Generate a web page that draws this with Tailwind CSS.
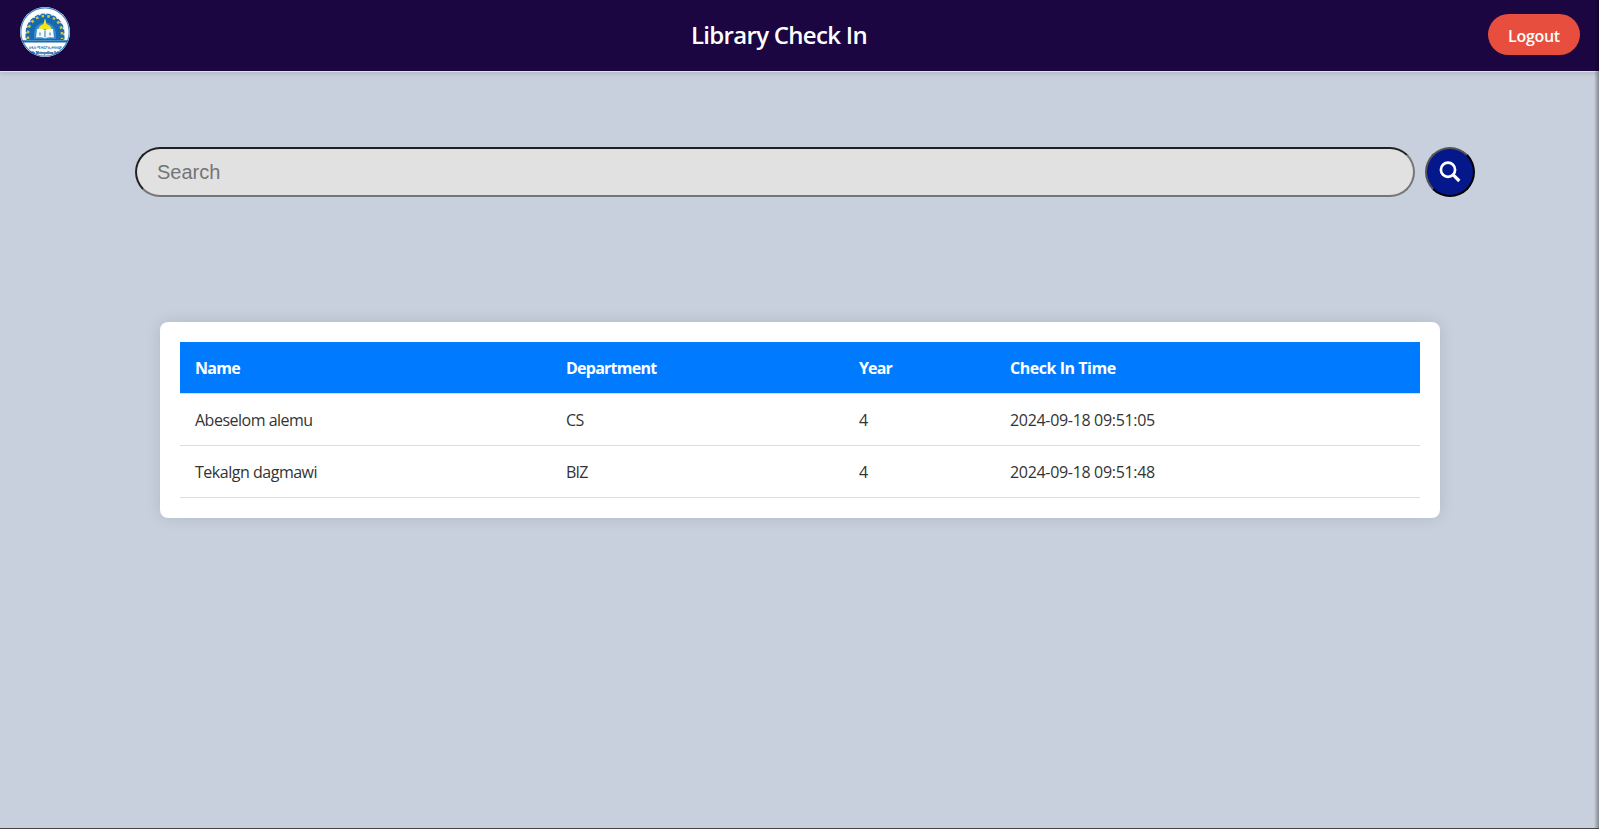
<!DOCTYPE html>
<html lang="en">
<head>
<meta charset="utf-8">
<title>Library Check In</title>
<script src="https://cdn.jsdelivr.net/npm/@tailwindcss/browser@4"></script>
</head>
<body class="relative flex h-screen flex-col overflow-hidden bg-[#c8cfdd] font-['Open_Sans','Noto_Sans',sans-serif] text-[#333]">
<header class="relative flex h-[72px] shrink-0 items-start justify-between border-b border-[#e2dbea] bg-[#1b0642] pr-[19px] pl-5 shadow-[0_2px_4px_rgba(0,0,0,0.1)]">
  <svg class="mt-[7px] size-[50px]" viewBox="0 0 50 50">
    <clipPath id="c"><circle cx="25" cy="25" r="25"/></clipPath>
    <g clip-path="url(#c)">
      <rect width="50" height="50" fill="#fff"/>
      <circle cx="25" cy="25" r="24.200" fill="none" stroke="#3f86c4" stroke-width="1.200"/>
      <path d="M5.500 33V26A19.500 19.500 0 0 1 44.500 26V33Z" fill="#1769b2"/>
      <path d="M5.500 33V26A19.500 19.500 0 0 1 44.500 26V33" fill="none" stroke="#eef5f5" stroke-width="2" stroke-dasharray="2 4.200"/>
      <path d="M8 32V26A17 17 0 0 1 42 26V32" fill="none" stroke="#c8c34a" stroke-width="2.600" stroke-dasharray="2.600 3.200"/>
      <path d="M12 33V27A13 13 0 0 1 38 27V33Z" fill="#1769b2"/>
      <path d="M14 32V27A11 11.500 0 0 1 36 27V32Z" fill="#328bc8"/>
      <path d="M18.500 22q.5-3.500 5-5l1.200-5h.6l1.200 5q4.500 1.500 5 5Z" fill="#f4e516"/>
      <path d="M17 22q5-1 8 1 3-2 8-1l1 8.500q-6-1-9 1-3-2-9-1Z" fill="#f3f8fb"/>
      <path d="M25 23.500v7M20 25.500v3M30 25.500v3" stroke="#4b91c5" stroke-width="1.200" fill="none"/>
      <path d="M2 33.300H48L47 35.500H3Z" fill="#1769b2"/>
      <text x="25" y="41.500" text-anchor="middle" font-size="4.500" font-weight="900" fill="#1767ac" textLength="33" lengthAdjust="spacingAndGlyphs" font-family="Noto Sans">አዲስ ሜትሮፖሊታን ኮሌጅ</text>
      <text x="25" y="46.500" text-anchor="middle" font-size="5" font-weight="700" fill="#0d56a0" stroke="#0d56a0" stroke-width=".25" textLength="36" lengthAdjust="spacingAndGlyphs" font-family="Liberation Serif">Addis Metropolitan School</text>
    </g>
  </svg>
  <h1 class="mt-[17px] text-[24px] leading-9 font-semibold tracking-[-0.7px] text-white">Library Check In</h1>
  <button class="mt-[14px] h-[41px] w-[92px] rounded-[20.500px] bg-[#e84e3e] pt-[2px] text-[16px] font-semibold tracking-[-0.3px] text-white">Logout</button>
</header>
<main class="flex flex-col items-center">
  <form class="mt-[75px] ml-[11px] flex gap-[10px]">
    <input class="h-[50px] w-[1280px] rounded-[25px] border-2 border-[#767676] [border-style:inset] bg-[#e1e1e1] px-5 font-['Liberation_Sans',sans-serif] text-[20px] placeholder:text-[#757575]" placeholder="Search">
    <button type="button" class="flex size-[50px] items-center justify-center rounded-full border-2 border-black [border-style:outset] bg-[#04178b]">
      <svg class="size-6" viewBox="0 0 24 24" fill="none" stroke="#fff"><circle cx="10" cy="9.700" r="7.100" stroke-width="2.700"/><path d="M15 14.700l6.300 6.300" stroke-width="3.200"/></svg>
    </button>
  </form>
  <section class="mt-[125px] mr-px ml-[2px] h-[196px] w-[1280px] rounded-lg bg-white p-5 shadow-[0_0_15px_rgba(0,0,0,0.1)]">
    <table class="w-[1240px] table-fixed border-collapse text-left text-[16px] leading-6">
      <colgroup><col class="w-[371px]"><col class="w-[293px]"><col class="w-[151px]"><col></colgroup>
      <thead class="bg-[#007bff] text-white">
        <tr class="h-[51px] border-b border-[#ddd] font-bold"><th class="px-[15px] pt-0.5 tracking-[-0.7px]">Name</th><th class="px-[15px] pt-0.5 tracking-[-0.75px]">Department</th><th class="px-[15px] pt-0.5 tracking-[-0.9px]">Year</th><th class="px-[15px] pt-0.5 tracking-[-0.47px]">Check In Time</th></tr>
      </thead>
      <tbody>
        <tr class="h-[52px] border-b border-[#ddd]"><td class="px-[15px] pt-0.5 tracking-[-0.5px]">Abeselom alemu</td><td class="px-[15px] pt-0.5 tracking-[-0.5px]">CS</td><td class="px-[15px] pt-0.5">4</td><td class="px-[15px] pt-0.5 tracking-[-0.32px]">2024-09-18 09:51:05</td></tr>
        <tr class="h-[52px] border-b border-[#ddd]"><td class="px-[15px] pt-0.5 tracking-[-0.48px]">Tekalgn dagmawi</td><td class="px-[15px] pt-0.5 tracking-[-0.8px]">BIZ</td><td class="px-[15px] pt-0.5">4</td><td class="px-[15px] pt-0.5 tracking-[-0.32px]">2024-09-18 09:51:48</td></tr>
      </tbody>
    </table>
  </section>
</main>
<div class="absolute top-0 right-0 h-full w-[5px] bg-linear-to-r from-transparent to-black/35"></div>
<div class="absolute bottom-0 left-0 h-px w-full bg-[#444]"></div>
</body>
</html>
